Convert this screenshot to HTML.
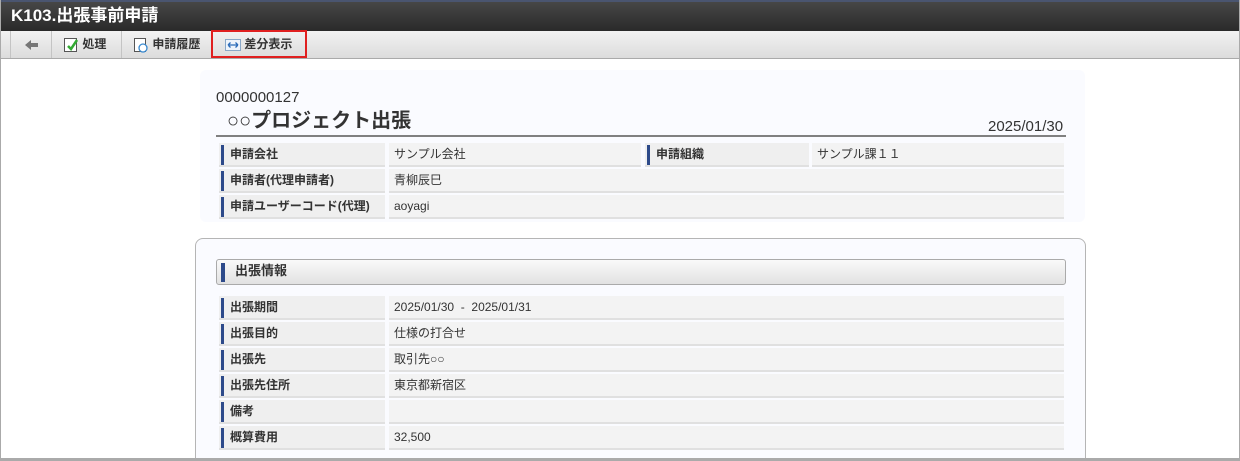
<!DOCTYPE html>
<html style="overflow:hidden;width:1240px;height:461px"><head><meta charset="utf-8"><style>
*{margin:0;padding:0;box-sizing:border-box}
body{width:1240px;height:461px;overflow:hidden;background:#fff;font-family:"Liberation Sans","Noto Sans CJK JP",sans-serif;color:#333;position:relative;line-height:1.2}
.frame{position:absolute;left:0;top:0;width:1240px;height:461px;border:1px solid #aaa;border-top:none;pointer-events:none}
.title{position:absolute;left:0;top:0;width:1240px;height:31px;background:linear-gradient(#474747,#2a2a2a);border-top:2px solid #4a5570;color:#fff;font-weight:bold;font-size:17px;line-height:27px;padding-left:11px}
.tb{position:absolute;left:0;top:31px;width:1240px;height:28px;background:linear-gradient(#f2f2f2,#dcdcdc);border-bottom:1px solid #aaa}
.btn{position:absolute;top:0;height:27px;border-left:1px solid #c4c4c4;font-size:12px;font-weight:bold;color:#333;line-height:26px}
.hdr{position:absolute;left:200px;top:70px;width:885px;height:152px;background:#fafbff;border-radius:6px}
.lbl{position:absolute;height:24px;background:#efefef;font-size:12px;font-weight:bold;line-height:22px;padding-left:11px;border-bottom:2px solid #e0e0e0}
.lbl:before{content:"";position:absolute;left:2px;top:2px;width:3px;height:20px;background:#2d4a8a}
.val{position:absolute;height:24px;background:#f3f3f3;font-size:12px;line-height:22px;padding-left:5px;border-bottom:2px solid #e0e0e0}
.card{position:absolute;left:195px;top:238px;width:891px;height:240px;border:1px solid #b5b5b5;border-radius:8px;background:#fafbff}
.sec{position:absolute;left:216px;top:259px;width:850px;height:26px;border:1px solid #aaa;border-radius:3px;background:linear-gradient(#fafafa,#e2e2e2);font-size:13px;font-weight:bold;line-height:22px;padding-left:18px}
.sec:before{content:"";position:absolute;left:4px;top:3px;width:4px;height:19px;background:#2d4a8a}
svg{vertical-align:middle}
</style></head><body>
<div class="title">K103.出張事前申請</div>
<div class="tb">
 <div class="btn" style="left:10px;width:41px;padding-left:13px"><svg width="16" height="14" viewBox="0 0 16 14"><path d="M1 7 L7 2 L7 5 L14 5 L14 9 L7 9 L7 12 Z" fill="#777"/></svg></div>
 <div class="btn" style="left:51px;width:70px;padding-left:11px"><svg width="16" height="16" viewBox="0 0 16 16"><rect x="1.5" y="1.5" width="12" height="13" fill="#fff" stroke="#555"/><path d="M5 9 L8 12 L14 3" stroke="#3a3" stroke-width="2.5" fill="none"/></svg> 処理</div>
 <div class="btn" style="left:121px;width:90px;padding-left:11px"><svg width="16" height="16" viewBox="0 0 16 16"><rect x="1.5" y="1.5" width="11" height="13" fill="#fff" stroke="#555"/><circle cx="10" cy="11" r="4" fill="#fff" stroke="#3a8ad0" stroke-width="1.3"/></svg> 申請履歴</div>
 <div class="btn" style="left:211px;width:96px;height:28px;top:-1px;border:2px solid #e02020;padding-left:12px;line-height:25px"><svg width="16" height="12" viewBox="0 0 16 12"><rect x="0.5" y="0.5" width="15" height="11" fill="#eef4fb" stroke="#8aa8c8"/><path d="M3 6 H13 M3 6 L5.5 3.5 M3 6 L5.5 8.5 M13 6 L10.5 3.5 M13 6 L10.5 8.5" stroke="#2a6ab8" stroke-width="1.3" fill="none"/></svg> 差分表示</div>
</div>
<div class="hdr"></div>
<div style="position:absolute;left:216px;top:89px;font-size:15px;color:#333">0000000127</div>
<div style="position:absolute;left:227px;top:109px;font-size:20px;font-weight:bold;color:#333">○○プロジェクト出張</div>
<div style="position:absolute;left:988px;top:118px;font-size:15px;color:#333">2025/01/30</div>
<div style="position:absolute;left:216px;top:135px;width:850px;height:2px;background:#808080"></div>
<div class="lbl" style="left:219px;top:143px;width:166px">申請会社</div>
<div class="val" style="left:389px;top:143px;width:252px">サンプル会社</div>
<div class="lbl" style="left:645px;top:143px;width:164px">申請組織</div>
<div class="val" style="left:812px;top:143px;width:252px">サンプル課１１</div>
<div class="lbl" style="left:219px;top:169px;width:166px">申請者(代理申請者)</div>
<div class="val" style="left:389px;top:169px;width:675px">青柳辰巳</div>
<div class="lbl" style="left:219px;top:195px;width:166px">申請ユーザーコード(代理)</div>
<div class="val" style="left:389px;top:195px;width:675px">aoyagi</div>
<div class="card"></div>
<div class="sec">出張情報</div>
<div class="lbl" style="left:219px;top:296px;width:166px">出張期間</div><div class="val" style="left:389px;top:296px;width:675px">2025/01/30 &nbsp;-&nbsp; 2025/01/31</div>
<div class="lbl" style="left:219px;top:322px;width:166px">出張目的</div><div class="val" style="left:389px;top:322px;width:675px">仕様の打合せ</div>
<div class="lbl" style="left:219px;top:348px;width:166px">出張先</div><div class="val" style="left:389px;top:348px;width:675px">取引先○○</div>
<div class="lbl" style="left:219px;top:374px;width:166px">出張先住所</div><div class="val" style="left:389px;top:374px;width:675px">東京都新宿区</div>
<div class="lbl" style="left:219px;top:400px;width:166px">備考</div><div class="val" style="left:389px;top:400px;width:675px"></div>
<div class="lbl" style="left:219px;top:426px;width:166px">概算費用</div><div class="val" style="left:389px;top:426px;width:675px">32,500</div>
<div style="position:absolute;left:0;top:458px;width:1240px;height:3px;background:#aaa"></div>
<div class="frame"></div>
</body></html>
